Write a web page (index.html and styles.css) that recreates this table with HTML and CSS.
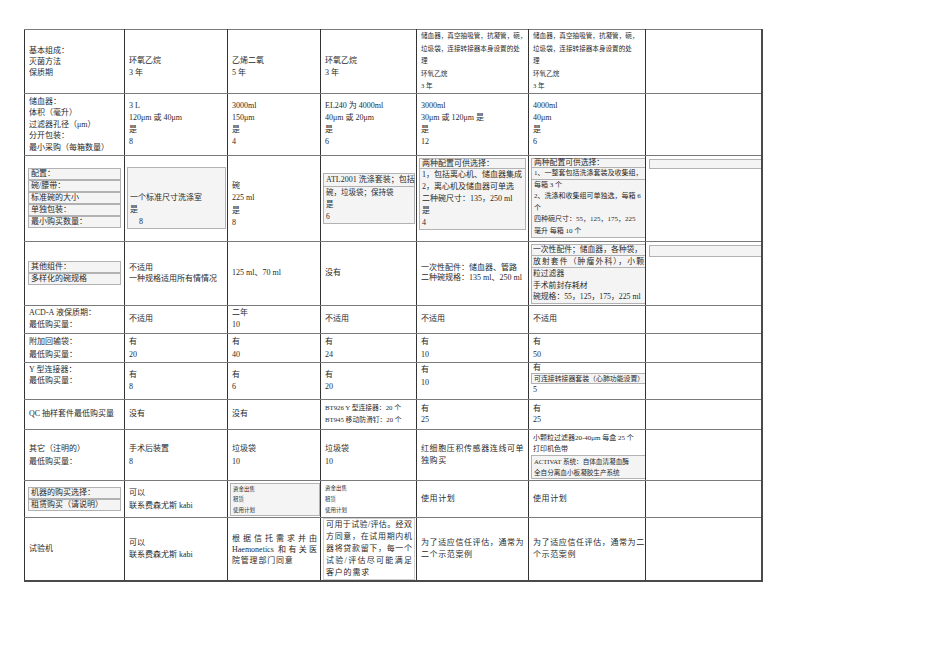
FILE: index.html
```html
<!DOCTYPE html>
<html lang="zh-CN">
<head>
<meta charset="utf-8">
<title>设备对比表</title>
<link rel="stylesheet" href="styles.css">
</head>
<body>
<table class="grid">
<colgroup><col class="c1"><col class="c2"><col class="c3"><col class="c4"><col class="c5"><col class="c6"><col class="c7"></colgroup>
<tr class="r1">
<td class="lh11">基本组成：<br>灭菌方法<br>保质期</td>
<td><br>环氧乙烷<br>3 年</td>
<td><br>乙烯二氧<br>5 年</td>
<td><br>环氧乙烷<br>3 年</td>
<td class="top sm lh126">储血器，真空抽吸管，抗凝管，碗，<br>垃圾袋，连接转接器本身设置的处<br>理<br>环氧乙烷<br>3 年</td>
<td class="top sm lh126">储血器，真空抽吸管，抗凝管，碗，<br>垃圾袋，连接转接器本身设置的处<br>理<br>环氧乙烷<br>3 年</td>
<td></td>
</tr>
<tr class="r2">
<td class="lh115">储血器：<br>体积（毫升）<br>过滤器孔径（μm）<br>分开包装：<br>最小采购（每箱数量）</td>
<td>3 L<br>120μm 或 40μm<br>是<br>8</td>
<td>3000ml<br>150μm<br>是<br>4</td>
<td>EL240 为 4000ml<br>40μm 或 20μm<br>是<br>6</td>
<td>3000ml<br>30μm 或 120μm 是<br>是<br>12</td>
<td>4000ml<br>40μm<br>是<br>6</td>
<td></td>
</tr>
<tr class="r3">
<td class="pl3"><div class="bx l10">配置：</div><div class="bx l10">碗/腰带：</div><div class="bx l10">标准碗的大小</div><div class="bx l10">单独包装：</div><div class="bx l10">最小购买数量：</div></td>
<td class="pl2"><div class="bx b2"><br><br>一个标准尺寸洗涤室<br>是<br><span class="ind">8</span></div></td>
<td class="lh125"><br>碗<br>225 ml<br>是<br>8</td>
<td class="pl2 f75"><div class="bx b4 f8">ATL2001 洗涤套装；包括</div><div class="bx b4 nt">碗，垃圾袋；保持袋<br>是<br>6</div></td>
<td class="top pl2 pt2"><div class="bx b5 l9">两种配置可供选择：</div><div class="bx b5 nt l12">1，包括离心机、储血器集成<br>2，离心机及储血器可单选<br>二种碗尺寸：135，250 ml<br>是<br>4</div></td>
<td class="top pl2 pt2 f7"><div class="bx b6 l8 md">两种配置可供选择：</div><div class="bx b6 nt l11">1、一整套包括洗涤套装及收集组，</div><div class="bx b6 nt l115">每箱 3 个<br>2、洗涤和收集组可单独选，每箱 6<br>个<br>四种碗尺寸：55，125，175，225<br>毫升 每箱 10 个</div></td>
<td class="top pl3 pt3"><div class="bx b7 l8">&nbsp;</div></td>
</tr>
<tr class="r4">
<td class="pl3"><div class="bx l10">其他组件：</div><div class="bx l10">多样化的碗规格</div></td>
<td class="lh11">不适用<br>一种规格适用所有情情况</td>
<td>125 ml、70 ml</td>
<td>没有</td>
<td class="lh105">一次性配件：储血器、管路<br>二种碗规格：135 ml、250 ml</td>
<td class="top pl2 pt2 f78"><div class="bx b6 l10">一次性配件；储血器，各种袋，</div><div class="bx b6 nt l11 jl">放射套件（肿瘤外科），小颗</div><div class="bx b6 nt l117">粒过滤器<br>手术前封存耗材<br>碗规格：55，125，175，225 ml</div></td>
<td class="top pl3 pt3"><div class="bx b7 l10">&nbsp;</div></td>
</tr>
<tr class="r5">
<td>ACD-A 液保质期：<br>最低购买量：</td>
<td>不适用</td>
<td>二年<br>10</td>
<td>不适用</td>
<td>不适用</td>
<td>不适用</td>
<td></td>
</tr>
<tr class="r6">
<td class="lh13">附加回输袋：<br>最低购买量：</td>
<td class="lh13">有<br>20</td>
<td class="lh13">有<br>40</td>
<td class="lh13">有<br>24</td>
<td class="lh13">有<br>10</td>
<td class="lh13">有<br>50</td>
<td></td>
</tr>
<tr class="r7">
<td class="top pt1 lh11">Y 型连接器：<br>最低购买量：</td>
<td>有<br>8</td>
<td>有<br>6</td>
<td>有<br>20</td>
<td class="top lh13">有<br>10</td>
<td class="top pl2"><div class="l10 pl2i">有</div><div class="bx b6 l9 f69">可连接转接器套装（心肺功能设置）</div><div class="l12 pl2i">5</div></td>
<td></td>
</tr>
<tr class="r8">
<td>QC 抽样套件最低购买量</td>
<td>没有</td>
<td>没有</td>
<td class="xs">BT926 Y 型连接器：20 个<br>BT945 移动防滑钉：20 个</td>
<td class="lh11">有<br>25</td>
<td class="lh11">有<br>25</td>
<td></td>
</tr>
<tr class="r9">
<td class="lh13">其它（注明的）<br>最低购买量：</td>
<td class="lh13">手术后装置<br>8</td>
<td class="lh13">垃圾袋<br>10</td>
<td class="lh13">垃圾袋<br>10</td>
<td class="big">红细胞压积传感器连线可单<br>独购买</td>
<td class="top pl2 pt3 f7"><div class="l11 pl2i">小颗粒过滤器20-40μm 每盒 25 个<br>打印机色带</div><div class="bx b6 l11 s66">ACTIVAT 系统：自体血清凝血酶<br>全自分离血小板凝胶生产系统</div></td>
<td></td>
</tr>
<tr class="r10">
<td class="pl3"><div class="bx l10">机器的购买选择：</div><div class="bx l10">租赁购买（请说明）</div></td>
<td class="lh13">可以<br>联系费森尤斯 kabi</td>
<td class="top pl2 pt2"><div class="bx b3 tiny">资金出售<br>租赁<br>使用计划</div></td>
<td class="top pt2 tiny t11">资金出售<br>租赁<br>使用计划</td>
<td class="big">使用计划</td>
<td class="big">使用计划</td>
<td></td>
</tr>
<tr class="r11">
<td>试验机</td>
<td class="lh125">可以<br>联系费森尤斯 kabi</td>
<td class="wrap lh11"><div class="j">根据信托需求并由</div><div class="j">Haemonetics 和有关医</div><div class="sp">院管理部门同意</div></td>
<td class="top pl2 wrap"><div class="bx b8"><div class="j">可用于试验/评估。经双</div><div class="j">方同意，在试用期内机</div><div class="j">器将贷款留下，每一个</div><div class="j">试验/评估尽可能满足</div><div class="sp">客户的需求</div></div></td>
<td class="big">为了适应信任评估，通常为<br>二个示范案例</td>
<td class="big">为了适应信任评估，通常为二<br>个示范案例</td>
<td></td>
</tr>
</table>
</body>
</html>
```
FILE: styles.css
```css
html, body {
  margin: 0;
  padding: 0;
  background: #ffffff;
}
body {
  font-family: "Liberation Serif", "Noto Sans CJK SC", serif;
  color: #2a2a2a;
}
.grid {
  border-collapse: collapse;
  table-layout: fixed;
  width: 737px;
  margin: 29px 0 0 24px;
  font-size: 8px;
  line-height: 12px;
  opacity: 0.999;
}
.c1 { width: 100px; }
.c2 { width: 103px; }
.c3 { width: 93px; }
.c4 { width: 96px; }
.c5 { width: 112px; }
.c6 { width: 117px; }
.c7 { width: 116px; }

.grid td {
  border-left: 1px solid #333;
  border-right: 1px solid #333;
  border-top: 1px solid #7a7a7a;
  border-bottom: 1px solid #7a7a7a;
  padding: 0 3px 0 4px;
  vertical-align: middle;
  white-space: nowrap;
  overflow: visible;
}
.grid td:last-child { border-right: 2px solid #4a4a4a; }
.grid tr:last-child td { border-bottom: 2px solid #4a4a4a; }

.r1 { height: 63px; }
.r2 { height: 62px; }
.r3 { height: 86px; }
.r4 { height: 64px; }
.r5 { height: 28px; }
.r6 { height: 29px; }
.r7 { height: 37px; }
.r8 { height: 30px; }
.r9 { height: 51px; }
.r10 { height: 37px; }
.r11 { height: 64px; }

.top { vertical-align: top !important; }
.pt1 { padding-top: 1px !important; }
.pt2 { padding-top: 2px !important; }
.pt3 { padding-top: 3px !important; }
.pl2 { padding-left: 2px !important; }
.pl3 { padding-left: 3px !important; }
.pl2i { padding-left: 2px; }

.lh105 { line-height: 10.5px; }
.lh11 { line-height: 11px; }
.lh115 { line-height: 11.5px; }
.lh125 { line-height: 12.5px; }
.lh126 { line-height: 12.6px; }
.lh13 { line-height: 13px; }

.sm { font-size: 6.6px; }
.f7 { font-size: 7px; }
.f69 { font-size: 6.9px; }
.f75 { font-size: 7.5px; }
.f78 { font-size: 7.8px; }
.f8 { font-size: 8px; }
.md { font-size: 7.8px; }
.xs { font-size: 6.8px; }
.s66 { font-size: 6.6px; }
.tiny { font-size: 5.5px; }
.t11 { line-height: 11px; }
.big { font-size: 8px; letter-spacing: 0.6px; line-height: 12px; }
.sp { letter-spacing: 0.8px; }

.bx {
  border: 1px solid #b2b2b2;
  background: #f4f4f4;
  padding: 0 2px;
}
.nt { border-top: none; }
.l8 { line-height: 8px; }
.l9 { line-height: 9px; }
.l10 { line-height: 10px; }
.l11 { line-height: 11px; }
.l115 { line-height: 11.5px; }
.l117 { line-height: 11.7px; }
.l12 { line-height: 12px; }

.b2 { width: 93px; line-height: 12px; }
.b3 { width: 84px; line-height: 10.5px; }
.b4 { width: 86px; }
.b4.nt { line-height: 12px; }
.b5 { width: 101px; }
.b6 { width: 109px; }
.f78 .b6 { padding: 0 1px; width: 111px; }
.b7 { width: 108px; }
.b8 { width: 86px; border-color: #d0d0d0; background: #ffffff; line-height: 12px; }
.ind { padding-left: 9px; }
.jl { text-align: justify; text-align-last: justify; }

.wrap { white-space: normal !important; }
.j { text-align: justify; text-align-last: justify; white-space: nowrap; }
```
